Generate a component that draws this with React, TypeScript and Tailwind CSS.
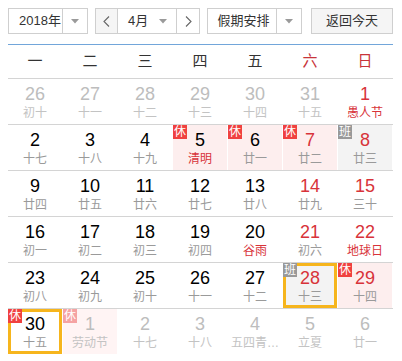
type Day = {
  n: number
  l: string
  other?: boolean
  red?: boolean
  fest?: boolean
  badge?: "休" | "班"
  sel?: boolean
}

const weeks: Day[][] = [
  [
    { n: 26, l: "初十", other: true },
    { n: 27, l: "十一", other: true },
    { n: 28, l: "十二", other: true },
    { n: 29, l: "十三", other: true },
    { n: 30, l: "十四", other: true },
    { n: 31, l: "十五", other: true },
    { n: 1, l: "愚人节", red: true, fest: true },
  ],
  [
    { n: 2, l: "十七" },
    { n: 3, l: "十八" },
    { n: 4, l: "十九" },
    { n: 5, l: "清明", fest: true, badge: "休" },
    { n: 6, l: "廿一", badge: "休" },
    { n: 7, l: "廿二", red: true, badge: "休" },
    { n: 8, l: "廿三", red: true, badge: "班" },
  ],
  [
    { n: 9, l: "廿四" },
    { n: 10, l: "廿五" },
    { n: 11, l: "廿六" },
    { n: 12, l: "廿七" },
    { n: 13, l: "廿八" },
    { n: 14, l: "廿九", red: true },
    { n: 15, l: "三十", red: true },
  ],
  [
    { n: 16, l: "初一" },
    { n: 17, l: "初二" },
    { n: 18, l: "初三" },
    { n: 19, l: "初四" },
    { n: 20, l: "谷雨", fest: true },
    { n: 21, l: "初六", red: true },
    { n: 22, l: "地球日", red: true, fest: true },
  ],
  [
    { n: 23, l: "初八" },
    { n: 24, l: "初九" },
    { n: 25, l: "初十" },
    { n: 26, l: "十一" },
    { n: 27, l: "十二" },
    { n: 28, l: "十三", red: true, badge: "班", sel: true },
    { n: 29, l: "十四", red: true, badge: "休" },
  ],
  [
    { n: 30, l: "十五", badge: "休", sel: true },
    { n: 1, l: "劳动节", other: true, badge: "休" },
    { n: 2, l: "十七", other: true },
    { n: 3, l: "十八", other: true },
    { n: 4, l: "五四青…", other: true },
    { n: 5, l: "立夏", other: true },
    { n: 6, l: "廿一", other: true },
  ],
]

const Caret = () => (
  <svg width="8" height="5" viewBox="0 0 8 5">
    <path d="M0 0h8L4 4.5z" fill="#9a9a9a" />
  </svg>
)

const Chevron = ({ dir }: { dir: "l" | "r" }) => (
  <svg width="7" height="11" viewBox="0 0 7 11">
    <path
      d={dir === "l" ? "M6 0.5L1 5.5l5 5" : "M1 0.5l5 5-5 5"}
      fill="none"
      stroke="#666"
      strokeWidth="1.1"
    />
  </svg>
)

function Cell({ d }: { d: Day }) {
  let bg = "bg-white"
  if (d.badge === "休") bg = d.other ? "bg-[#fff4f4]" : "bg-[#fdeeee]"
  if (d.badge === "班") bg = "bg-[#f3f3f3]"
  if (d.sel && d.badge === "休") bg = "bg-white"

  const num = d.other ? "text-[#bdbdbd]" : d.red ? "text-[#d8333a]" : "text-black"
  const lunar = d.other
    ? "text-[#c3c3c3]"
    : d.fest
      ? "text-[#d8333a]"
      : "text-[#9a9a9a]"

  return (
    <div className="pr-[1px]">
      <div
        className={`relative flex h-[45px] flex-col items-center pt-[4px] ${bg} ${
          d.sel ? "shadow-[inset_0_0_0_3px_#f6b51d]" : ""
        }`}
      >
        <span className={`text-[18px] leading-[22px] ${num}`}>{d.n}</span>
        <span className={`text-[12px] leading-[16px] whitespace-nowrap ${lunar}`}>{d.l}</span>
        {d.badge && (
          <span
            className={`absolute left-0 top-0 flex h-[14px] w-[14px] items-center justify-center text-[12px] leading-[14px] text-white ${
              d.badge === "班"
                ? "bg-[#999999]"
                : d.other
                  ? "bg-[#f5a3a3]"
                  : "bg-[#f0413f]"
            }`}
          >
            {d.badge}
          </span>
        )}
      </div>
    </div>
  )
}

export default function App() {
  return (
    <div
      className="h-[361px] w-[402px] bg-white px-[8px] pt-[8px] text-[#333]"
      style={{ fontFamily: '"Liberation Sans", "Noto Sans CJK SC", sans-serif' }}
    >
      {/* toolbar */}
      <div className="flex h-[26px] items-stretch text-[13px]">
        <div className="flex w-[80px] border border-[#cfcfcf]">
          <span className="flex flex-1 items-center pl-[10px]">2018年</span>
          <span className="flex w-[25px] items-center justify-center border-l border-[#cfcfcf]">
            <Caret />
          </span>
        </div>

        <div className="ml-[7px] flex w-[105px] border border-[#cfcfcf]">
          <span className="flex w-[22px] items-center justify-center border-r border-[#cfcfcf] bg-[#f5f5f5]">
            <Chevron dir="l" />
          </span>
          <span className="flex flex-1 items-center justify-between pl-[10px] pr-[9px]">
            4月
            <Caret />
          </span>
          <span className="flex w-[23px] items-center justify-center border-l border-[#cfcfcf]">
            <Chevron dir="r" />
          </span>
        </div>

        <div className="ml-[7px] flex w-[95px] border border-[#cfcfcf]">
          <span className="flex flex-1 items-center justify-center pl-[3px]">假期安排</span>
          <span className="flex w-[25px] items-center justify-center border-l border-[#cfcfcf]">
            <Caret />
          </span>
        </div>

        <button className="ml-[9px] flex w-[82px] items-center justify-center border border-[#cfcfcf] bg-[#f5f5f5]">
          返回今天
        </button>
      </div>

      <div className="mt-[10px] w-[385px] border-t border-[#72a6da]">
        <div className="grid h-[33px] grid-cols-7 text-[15px]">
          {["一", "二", "三", "四", "五", "六", "日"].map((w, i) => (
            <div
              key={w}
              className={`flex items-center justify-center pr-[1px] ${i > 4 ? "text-[#c8343a]" : "text-[#333]"}`}
            >
              {w}
            </div>
          ))}
        </div>

        {weeks.map((wk, i) => (
          <div
            key={i}
            className={`grid grid-cols-7 ${i === 0 ? "border-t border-[#d4d4d4]" : "border-t border-[#d4d4d4]"}`}
          >
            {wk.map((d, j) => (
              <Cell key={j} d={d} />
            ))}
          </div>
        ))}
      </div>
    </div>
  )
}
